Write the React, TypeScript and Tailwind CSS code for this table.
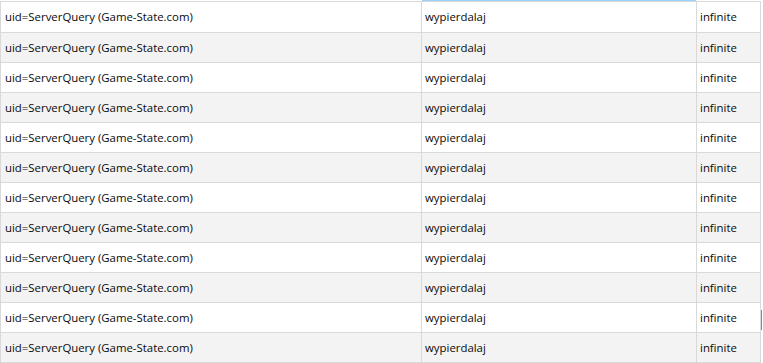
import React from "react";

const rows = Array.from({ length: 12 }, (_, i) => i);

export default function App() {
  return (
    <div
      className="w-[763px] h-[363px] overflow-hidden bg-white text-[11.4px] text-[#0a0a0a] flex"
      style={{ fontFamily: '"Open Sans", "Noto Sans", sans-serif' }}
    >
      <div className="w-[761px] flex flex-col">
        <div className="flex h-[1px]">
          <div className="w-[422px]" />
          <div className="w-[274px] bg-[#99d1ff]" />
          <div className="flex-1" />
        </div>
        <div className="flex flex-col border-t border-l border-r border-[#d9d9d9]">
          {rows.map((i) => (
            <div
              key={i}
              className={`flex border-b border-[#d9d9d9] ${i === 0 ? "h-[31px]" : "h-[30px]"} ${
                i % 2 === 1 ? "bg-[#f3f3f3]" : "bg-white"
              }`}
            >
              <div className="w-[421px] shrink-0 border-r border-[#d9d9d9] pl-[4px] flex items-center whitespace-nowrap">
                uid=ServerQuery (Game-State.com)
              </div>
              <div className="w-[275px] shrink-0 border-r border-[#d9d9d9] pl-[3px] flex items-center whitespace-nowrap">
                wypierdalaj
              </div>
              <div className="flex-1 pl-[3px] flex items-center whitespace-nowrap">infinite</div>
            </div>
          ))}
        </div>
      </div>
      <div className="w-[2px] flex flex-col">
        <div className="h-[310px]" />
        <div className="h-[20px] w-[1px] bg-[#8a8a8a]" />
      </div>
    </div>
  );
}
